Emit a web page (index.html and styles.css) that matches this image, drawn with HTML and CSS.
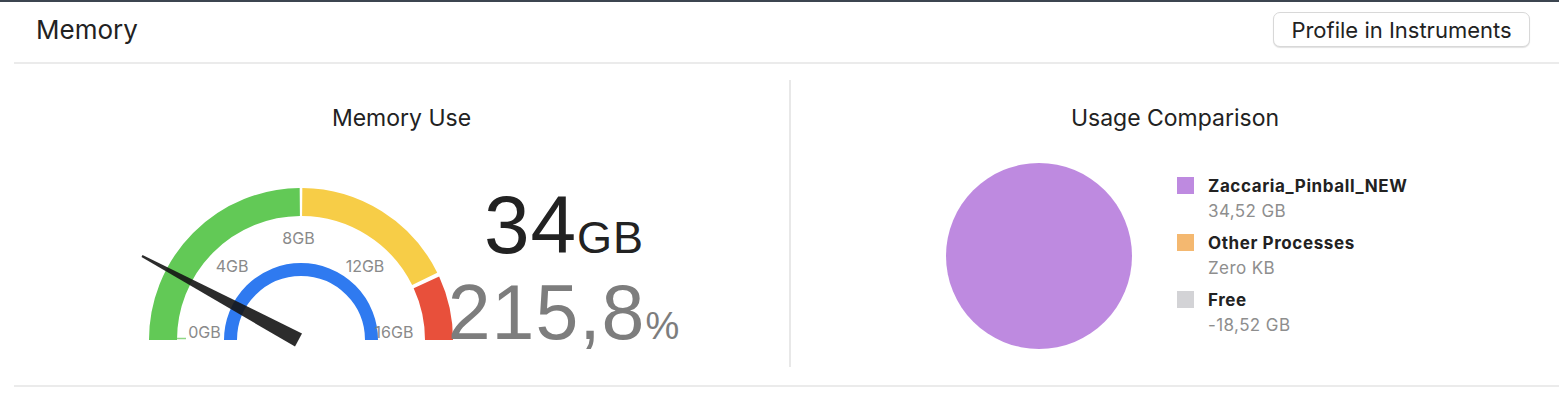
FILE: index.html
```html
<!DOCTYPE html>
<html>
  <head>
    <title>Memory</title>
    <link rel="stylesheet" href="styles.css">
  </head>
  <body>
    <div class="topbar"></div>
    <header class="header">
      <h1 class="header-title">Memory</h1>
      <button class="btn">Profile in Instruments</button>
    </header>
    <main class="main">
      <section class="panel panel-left">
        <h2 class="panel-title">Memory Use</h2>
        <div class="gauge-row">
          <svg class="gauge" width="316" height="172" viewBox="0 0 316 172">
            <!-- outer ring: 0-8GB green, 8-14GB yellow, rest red -->
            <path d="M23 160 A138 138 0 0 1 159.8 22" fill="none" stroke="#62c956" stroke-width="28" />
            <path d="M162.2 22 A138 138 0 0 1 284.7 98.9" fill="none" stroke="#f7cd47" stroke-width="28" />
            <path d="M286.4 102.3 A138 138 0 0 1 299 160" fill="none" stroke="#e8503b" stroke-width="28" />
            <line x1="37" y1="158.5" x2="46" y2="158.5" stroke="#8fd685" stroke-width="1.5" />
            <!-- inner ring -->
            <path d="M90.5 160 A70.5 70.5 0 0 1 231.5 160" fill="none" stroke="#2f7af0" stroke-width="13" />
            <g class="tick">
              <text x="64.5" y="158">0GB</text>
              <text x="92" y="92">4GB</text>
              <text x="158.5" y="64">8GB</text>
              <text x="225" y="92">12GB</text>
              <text x="254" y="158">16GB</text>
            </g>
            <polygon points="2.5,75.1 1.5,76.9 155,166.6 162,153.4" fill="#151515" fill-opacity="0.9" />
          </svg>
          <div class="readout">
            <div class="readout-used">34<span class="unit-gb">GB</span></div>
            <div class="readout-pct">215,8<span class="unit-pct">%</span></div>
          </div>
        </div>
      </section>
      <div class="divider"></div>
      <section class="panel panel-right">
        <h2 class="panel-title">Usage Comparison</h2>
        <div class="pie-row">
          <svg class="pie" width="186" height="186" viewBox="0 0 186 186">
            <circle cx="93" cy="93" r="93" fill="#be8ae0" />
          </svg>
          <ul class="legend">
            <li class="legend-item">
              <span class="swatch" style="background-color: #be8ae0"></span>
              <div>
                <div class="legend-label">Zaccaria_Pinball_NEW</div>
                <div class="legend-value">34,52 GB</div>
              </div>
            </li>
            <li class="legend-item">
              <span class="swatch" style="background-color: #f4b870"></span>
              <div>
                <div class="legend-label">Other Processes</div>
                <div class="legend-value">Zero KB</div>
              </div>
            </li>
            <li class="legend-item">
              <span class="swatch" style="background-color: #d3d3d6"></span>
              <div>
                <div class="legend-label">Free</div>
                <div class="legend-value">-18,52 GB</div>
              </div>
            </li>
          </ul>
        </div>
      </section>
    </main>
  </body>
</html>
```

FILE: styles.css
```css
body {
  margin: 0;
  background-color: #fff;
  font-family: Inter, "Noto Sans", sans-serif;
  color: #222;
  overflow: hidden;
}

.topbar {
  height: 2px;
  background-color: #3c4550;
}

.header {
  display: flex;
  justify-content: space-between;
  align-items: center;
  height: 55px;
  padding: 0 29px 5px 22px;
  margin-left: 14px;
  border-bottom: 2px solid #ebebeb;
}

.header-title {
  margin: 0;
  font-size: 26px;
  font-weight: 400;
  line-height: 30px;
}

.btn {
  height: 35px;
  width: 257px;
  padding: 0;
  font-family: Inter, sans-serif;
  font-size: 22px;
  color: #222;
  background-color: #fff;
  border: 1px solid #d8d8d8;
  border-radius: 7px;
  box-shadow: 0 1px 1px rgba(0, 0, 0, 0.12);
}

.main {
  display: flex;
  height: 287px;
  margin-left: 14px;
  padding: 16px 0 18px;
  border-bottom: 2px solid #ebebeb;
}

.panel-left {
  width: 775px;
}

.panel-right {
  flex: 1;
}

.divider {
  width: 2px;
  background-color: #e8e8e8;
}

.panel-title {
  margin: 0;
  padding-top: 24px;
  font-size: 23px;
  font-weight: 400;
  line-height: 28px;
  text-align: center;
}

.gauge-row {
  display: flex;
  margin-top: 48px;
}

.gauge {
  display: block;
  flex-shrink: 0;
  margin-left: 126px;
}

.tick text {
  font-family: Inter, sans-serif;
  font-size: 16px;
  fill: #8a8a8a;
  text-anchor: middle;
}

.readout {
  width: 260px;
  margin-left: -22px;
  padding-top: 4px;
  font-family: "Liberation Sans", Arial, sans-serif;
  text-align: center;
  line-height: 1;
}

.readout-used {
  font-size: 82px;
  letter-spacing: 1px;
  color: #222;
}

.unit-gb {
  font-size: 45px;
}

.readout-pct {
  margin-top: 8px;
  font-size: 77px;
  letter-spacing: 1px;
  color: #7d7d7d;
}

.unit-pct {
  font-size: 38px;
}

.pie-row {
  display: flex;
  align-items: center;
  margin-top: 31px;
}

.pie {
  display: block;
  margin-left: 155px;
}

.legend {
  list-style: none;
  margin: 0 0 0 45px;
  padding: 0;
  display: flex;
  flex-direction: column;
  gap: 6px;
}

.legend-item {
  display: flex;
  gap: 14px;
}

.swatch {
  width: 17px;
  height: 17px;
  margin-top: 3px;
}

.legend-label {
  font-size: 17px;
  font-weight: 700;
  line-height: 24px;
  letter-spacing: 0.6px;
}

.legend-value {
  font-size: 17px;
  line-height: 27px;
  letter-spacing: 0.4px;
  color: #8e8e8e;
}
```
